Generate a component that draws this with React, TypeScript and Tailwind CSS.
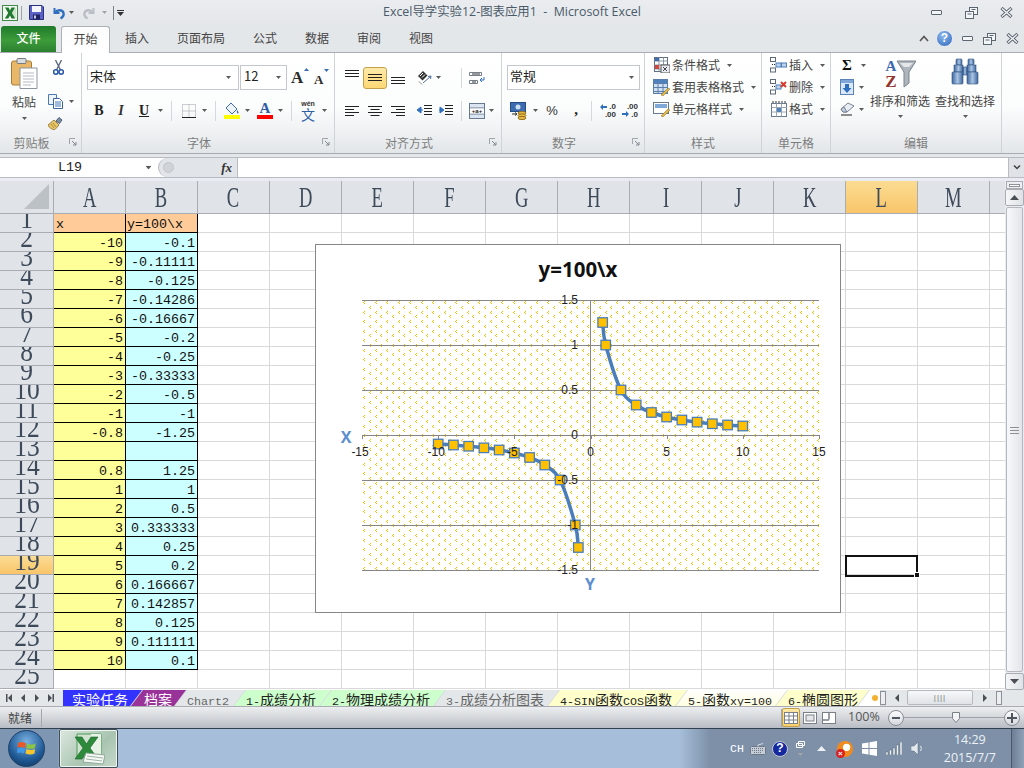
import React from "react";

type P = { className?: string };

const Drop = ({ className = "" }: P) => (
  <svg viewBox="0 0 5 3" className={`w-[5px] h-[3px] shrink-0 ${className}`}><path d="M0 0h5L2.500 3z" fill="#5a5a5a" /></svg>
);
const Sep = ({ className = "" }: P) => <div className={`w-px h-[20px] bg-[#d5d8dc] shrink-0 ${className}`} />;

const ExcelSmall = () => (
  <svg viewBox="0 0 16 16" className="w-[16px] h-[16px]">
    <rect x="0.5" y="0.5" width="15" height="15" fill="#f4f8f2" stroke="#3f8a48" />
    <rect x="9" y="3" width="5" height="10" fill="#cfe5cd" />
    <path d="M3 2.500h3.600L8 5.400 9.500 2.500H13L9.800 8 13.200 13.500H9.600L8 10.400 6.300 13.500H2.800L6.200 8z" fill="#1f7a30" />
  </svg>
);
const Save = () => (
  <svg viewBox="0 0 15 15" className="w-[15px] h-[15px]">
    <path d="M.5.5h12.500l1.500 1.500v12.500H.5z" fill="#5a62c6" stroke="#2b2f80" />
    <rect x="3" y="1" width="9" height="6" fill="#f4f6fb" />
    <rect x="4" y="9.500" width="7" height="5" fill="#20245e" />
    <rect x="5" y="10.500" width="2" height="3" fill="#c6cbe8" />
  </svg>
);
const Undo = ({ grey }: { grey?: boolean }) => (
  <svg viewBox="0 0 14 14" className={`w-[14px] h-[14px] ${grey ? "-scale-x-100" : ""}`}>
    <path d="M2.500 2v5h5" fill="none" stroke={grey ? "#b9bfc5" : "#2f6fc0"} strokeWidth="2" />
    <path d="M3 6.500C5 3.800 10.500 3.200 11.500 7c.5 2.200-1 4.400-3 5.500" fill="none" stroke={grey ? "#b9bfc5" : "#2f6fc0"} strokeWidth="2.400" />
  </svg>
);
const Min = () => <div className="w-[11px] h-[5px] border border-[#5b6673] rounded-[1px] bg-[#f4f5f6]" />;
const Restore = () => (
  <svg viewBox="0 0 13 12" className="w-[13px] h-[12px]"><g fill="#f4f5f6" stroke="#5b6673"><rect x="4.500" y=".5" width="8" height="7" /><rect x=".5" y="4.500" width="8" height="7" /></g><path d="M2.500 7h4M6.500 2.500h4" stroke="#5b6673" /></svg>
);
const Close = () => (
  <svg viewBox="0 0 13 11" className="w-[13px] h-[11px]"><path d="M1.500 1 11.500 10M11.500 1 1.500 10" stroke="#5b6673" strokeWidth="3.200" /><path d="M2 1.500 11 9.500M11 1.500 2 9.500" stroke="#f4f5f6" strokeWidth="1.300" /></svg>
);
const Help = () => (
  <div className="w-[17px] h-[17px] rounded-full bg-[radial-gradient(circle_at_40%_30%,#8fb8ec,#2c67bb)] border border-[#e7edf5] text-white font-bold text-[12px] leading-[15px] text-center font-['Liberation_Sans']">?</div>
);

const Paste = () => (
  <svg viewBox="0 0 27 31" className="w-[27px] h-[31px]">
    <rect x=".5" y="3" width="20" height="24" rx="2" fill="#e8b868" stroke="#a87a3a" />
    <rect x="6" y=".5" width="9" height="5" rx="1" fill="#d8dde2" stroke="#7a7a7a" />
    <path d="M9 10h17v20.500H9z" fill="#fff" stroke="#8c95a0" />
    <path d="M12 15h11M12 18h11M12 21h11M12 24h11M12 27h8" stroke="#b3bac2" />
  </svg>
);
const Cut = () => (
  <svg viewBox="0 0 11 15" className="w-[11px] h-[15px]">
    <path d="M2.500 0 7.500 10M8.500 0 3.500 10" stroke="#5d6b7e" strokeWidth="1.400" />
    <circle cx="2.800" cy="12" r="2.200" fill="none" stroke="#2555a5" strokeWidth="1.500" />
    <circle cx="8.200" cy="12" r="2.200" fill="none" stroke="#2555a5" strokeWidth="1.500" />
  </svg>
);
const Copy = () => (
  <svg viewBox="0 0 15 15" className="w-[15px] h-[15px]">
    <path d="M.5.5h8v10h-8z" fill="#eef3fa" stroke="#4d78ae" />
    <path d="M5.500 4.500h6l3 3v7h-9z" fill="#fff" stroke="#3d66a0" />
    <path d="M7 8h6M7 10h6M7 12h6" stroke="#3f76c0" />
  </svg>
);
const Painter = () => (
  <svg viewBox="0 0 16 14" className="w-[16px] h-[14px]">
    <path d="M0 9 6 4l5 5-4 4.500C5 14 1 12 0 9z" fill="#e9c766" stroke="#9d8340" />
    <path d="M8 5l3-3.500 3 2.500-2.500 3.500z" fill="#7e8ea6" stroke="#4f5d73" />
    <path d="M3 8l3 4M5 7l3 4" stroke="#a98c3e" />
  </svg>
);
const Grow = ({ big }: { big?: boolean }) => (
  <div className={`relative font-['Liberation_Serif'] font-bold text-[#2b2b2b] leading-none ${big ? "text-[17px] w-[17px]" : "text-[13px] w-[14px] pt-[3px]"}`}>
    A
    <svg viewBox="0 0 5 3" className="absolute -top-[1px] -right-[1px] w-[5px] h-[3px]"><path d={big ? "M0 3h5L2.500 0z" : "M0 0h5L2.500 3z"} fill="#3c6cb4" /></svg>
  </div>
);
const Borders = () => (
  <svg viewBox="0 0 14 14" className="w-[14px] h-[14px]"><path d="M.5.5h13v13H.5zM7 .5v13M.5 7h13" fill="none" stroke="#9aa0a6" strokeDasharray="1 1" /><path d="M0 13.500h14" stroke="#222" /></svg>
);
const Fill = () => (
  <svg viewBox="0 0 16 17" className="w-[16px] h-[17px]">
    <path d="M2 6l5-5 6 6-5 5z" fill="#eef3fa" stroke="#3d6db0" />
    <path d="M13 8c1.500 1.500 2 3 1 3.500-1 .3-1.500-1.500-1-3.500z" fill="#3d6db0" />
    <rect y="13" width="16" height="4" fill="#ffff00" />
  </svg>
);
const FontColor = () => (
  <div className="w-[16px] flex flex-col items-center">
    <span className="font-['Liberation_Serif'] font-bold text-[15px] leading-[13px] text-[#2d5ca5]">A</span>
    <span className="w-[16px] h-[4px] bg-[#ff0000]" />
  </div>
);
const Wen = () => (
  <div className="w-[16px] flex flex-col items-center leading-none">
    <span className="font-['Liberation_Sans'] text-[7px] font-bold text-[#333] h-[7px]">wén</span>
    <span className="text-[14px] text-[#2f5fa5] h-[14px]">文</span>
  </div>
);
const Lines = ({ d }: { d: string }) => (
  <svg viewBox="0 0 14 12" className="w-[14px] h-[12px]"><path d={d} stroke="#222" fill="none" /></svg>
);
const Orient = () => (
  <svg viewBox="0 0 15 14" className="w-[15px] h-[14px]">
    <path d="M1 5l5-5 4.500 4.500-5 5z" fill="#333" />
    <path d="M3 5l3-3M5 6.500l3-3" stroke="#fff" />
    <path d="M6 12l8-7M14 5l-3 .5M14 5l-.5 3" fill="none" stroke="#4f6f9f" />
    <path d="M2 10.500l3 3" stroke="#888" />
  </svg>
);
const Indent = ({ out }: { out?: boolean }) => (
  <svg viewBox="0 0 15 12" className="w-[15px] h-[12px]">
    <path d={out ? "M7 .5h8M7 3.500h8M7 6.500h8M7 9.500h8" : "M6 .5h8M6 3.500h8M6 6.500h8M6 9.500h8"} stroke="#222" />
    <path d={out ? "M0 5l4-3v6zM4 5h2" : "M5 5L1 2v6zM0 5h2"} fill="#2f6fc0" stroke="#2f6fc0" />
  </svg>
);
const Wrap = () => (
  <svg viewBox="0 0 16 14" className="w-[16px] h-[14px]">
    <path d="M.5 1.500h12v3H.5zM.5 9.500h8v3H.5z" fill="#fff" stroke="#75808c" />
    <path d="M3 3h8M3 11h4" stroke="#333" />
    <path d="M15 6v3h-4M11 9l2-2M11 9l2 2" fill="none" stroke="#2f6fc0" />
  </svg>
);
const Merge = () => (
  <svg viewBox="0 0 16 16" className="w-[16px] h-[16px]">
    <rect x=".5" y=".5" width="15" height="15" fill="#dbe5f2" stroke="#6a7a8d" />
    <path d="M.5 5h15M.5 11h15" stroke="#6a7a8d" />
    <rect x="1" y="5.500" width="14" height="5" fill="#fff" />
    <text x="8" y="10" textAnchor="middle" fontSize="6" fontWeight="700" fontFamily="Liberation Sans" fill="#222">+a+</text>
  </svg>
);
const Currency = () => (
  <svg viewBox="0 0 17 18" className="w-[17px] h-[18px]">
    <rect x=".5" y=".5" width="15" height="9" fill="#3d6db0" stroke="#244c85" />
    <circle cx="8" cy="5" r="2.500" fill="#cfe0f5" />
    <g fill="#e8b942" stroke="#9a7420"><ellipse cx="12" cy="11" rx="4" ry="1.600" /><ellipse cx="12" cy="13.500" rx="4" ry="1.600" /><ellipse cx="12" cy="16" rx="4" ry="1.600" /></g>
    <path d="M2 12h5M7 12l-2-1.500M7 12l-2 1.500" stroke="#333" fill="none" />
  </svg>
);
const Dec = ({ more }: { more?: boolean }) => (
  <div className="w-[16px] relative font-['Liberation_Sans'] font-bold text-[8px] leading-[8px] text-[#333]">
    <div className="text-right">{more ? ".0" : ".00"}</div>
    <div className="text-right">{more ? ".00" : ".0"}</div>
    <svg viewBox="0 0 7 6" className={`absolute w-[7px] h-[6px] left-0 ${more ? "top-[1px]" : "top-[8px]"}`}><path d={more ? "M0 3l3-3v2h4v2H3v2z" : "M7 3L4 0v2H0v2h4v2z"} fill="#2f6fc0" /></svg>
  </div>
);
const Cond = () => (
  <svg viewBox="0 0 16 16" className="w-[16px] h-[16px]">
    <rect x=".5" y=".5" width="13" height="14" fill="#fff" stroke="#5f6f82" />
    <path d="M.5 4h13M.5 8h13M.5 12h13M5 .5v14M9.500 .5v14" stroke="#8a97a6" />
    <rect x="1" y="1" width="4" height="3" fill="#3d6db0" /><rect x="1" y="8" width="4" height="4" fill="#d8483a" />
    <rect x="7" y="8" width="9" height="8" fill="#e8ecf2" stroke="#555" />
    <path d="M9 10l4 4M13 10l-4 4" stroke="#444" />
  </svg>
);
const TableFmt = () => (
  <svg viewBox="0 0 17 17" className="w-[17px] h-[17px]">
    <rect x=".5" y=".5" width="14" height="14" fill="#cfe0f4" stroke="#5a7ea8" />
    <path d="M.5 4.500h14M.5 8.500h14M.5 12.500h14M5 .5v14M10 .5v14" stroke="#5a7ea8" />
    <rect x="1" y="1" width="13" height="3" fill="#4f81bd" />
    <path d="M8 16l7-7 2 1-7 7z" fill="#e8b942" stroke="#7d6a2a" strokeWidth=".5" />
  </svg>
);
const CellFmt = () => (
  <svg viewBox="0 0 17 15" className="w-[17px] h-[15px]">
    <rect x=".5" y=".5" width="15" height="11" fill="#fff" stroke="#6a7a8d" />
    <rect x="2" y="2" width="12" height="4" fill="#7fa7d8" />
    <path d="M8 14l7-7 2 1-7 7z" fill="#e8b942" stroke="#7d6a2a" strokeWidth=".5" />
  </svg>
);
const CellIns = ({ del }: { del?: boolean }) => (
  <svg viewBox="0 0 17 16" className="w-[17px] h-[16px]">
    <g fill="#fff" stroke="#5d6a78"><rect x=".5" y=".5" width="5" height="4" /><rect x=".5" y="11" width="5" height="4" /></g>
    <rect x="6" y="6" width="5" height="4" fill="#bcd3ee" stroke="#4f7fb8" />
    <path d="M2 7.500h3" stroke="#333" strokeDasharray="1 1" />
    {del ? <path d="M11 3l5 5M16 3l-5 5" stroke="#d83a2a" strokeWidth="2" /> : <rect x="11.500" y="6" width="5" height="4" fill="#bcd3ee" stroke="#4f7fb8" />}
  </svg>
);
const CellF = () => (
  <svg viewBox="0 0 16 16" className="w-[16px] h-[16px]">
    <rect x=".5" y="2.500" width="15" height="13" fill="#fff" stroke="#6a7a8d" />
    <path d="M5.500 2.500v13M10.500 2.500v13M.5 6.500h15M.5 11h15" stroke="#9aa6b4" />
    <rect x="6" y="7" width="4" height="4" fill="#4f81bd" />
    <path d="M1 1h14" stroke="#333" strokeDasharray="2 1" />
  </svg>
);
const FillDown = () => (
  <svg viewBox="0 0 14 16" className="w-[14px] h-[16px]">
    <rect x=".5" y=".5" width="13" height="15" fill="#dce8f7" stroke="#5b82b5" />
    <rect x="1" y="1" width="12" height="3" fill="#7fa7d8" />
    <path d="M5 5h4v4h2.500L7 14 2.500 9H5z" fill="#2f6fc0" />
  </svg>
);
const Eraser = () => (
  <svg viewBox="0 0 15 14" className="w-[15px] h-[14px]">
    <path d="M1 7l7-6 6 3-7 6H3z" fill="#e8edf4" stroke="#79838f" />
    <path d="M1 7l2 3h4L4 5z" fill="#bfd0e6" stroke="#79838f" />
    <path d="M1 13h11" stroke="#222" />
  </svg>
);
const SortIcon = () => (
  <svg viewBox="0 0 32 30" className="w-[32px] h-[30px]">
    <path d="M13 3h19l-7 11v11l-5 4V14z" fill="#aeb5bc" stroke="#7c848c" />
    <path d="M16 5h13l-4 4h-5z" fill="#e4e7ea" />
    <text x="7" y="13" textAnchor="middle" fontFamily="Liberation Serif" fontWeight="700" fontSize="15" fill="#3a67ad">A</text>
    <text x="7" y="29" textAnchor="middle" fontFamily="Liberation Serif" fontWeight="700" fontSize="17" fill="#93352e">Z</text>
  </svg>
);
const Binoc = () => (
  <svg viewBox="0 0 28 27" className="w-[28px] h-[27px]">
    <defs><linearGradient id="bn" x1="0" x2="1" y1="0" y2="0"><stop offset="0" stopColor="#3f689f" /><stop offset=".5" stopColor="#a9c2e2" /><stop offset="1" stopColor="#3f689f" /></linearGradient></defs>
    <g fill="url(#bn)" stroke="#30507c" strokeWidth=".6">
      <rect x="5" y="1" width="6" height="6" rx="1" /><rect x="17" y="1" width="6" height="6" rx="1" />
      <rect x="3" y="7" width="9" height="7" /><rect x="16" y="7" width="9" height="7" />
      <rect x="1" y="14" width="11" height="12" rx="1" /><rect x="16" y="14" width="11" height="12" rx="1" />
      <rect x="12" y="9" width="4" height="8" />
    </g>
  </svg>
);
const Launcher = () => (
  <svg viewBox="0 0 8 8" className="absolute right-[4px] top-[5px] w-[8px] h-[8px]"><path d="M.5 6V.5H6" fill="none" stroke="#a0a5ab" /><path d="M3 3l4 4M7 4v3H4" fill="none" stroke="#808790" /></svg>
);

const Group = ({ w, label, launcher, children }: { w: string; label: string; launcher?: boolean; children: React.ReactNode }) => (
  <div className={`${w} h-full flex flex-col border-r border-[#cfd2d6] shrink-0`}>
    <div className="flex-1 min-h-0">{children}</div>
    <div className={`h-[20px] relative text-center text-[12px] leading-[19px] text-[#7d7d7d] ${launcher ? "pr-[18px]" : ""}`}>
      {label}
      {launcher && <Launcher />}
    </div>
  </div>
);
const Combo = ({ w, text, pad = "pl-[2px]", arrow }: { w: string; text: string; pad?: string; arrow: string }) => (
  <div className={`${w} h-[25px] border border-[#c4c8cd] bg-white flex items-center ${pad} text-[13px] text-[#222]`}>
    <span className="flex-1 -mt-[3px]">{text}</span>
    <Drop className={arrow} />
  </div>
);
const B = ({ w, className = "", children }: { w: string; className?: string; children: React.ReactNode }) => (
  <div className={`${w} shrink-0 flex items-center justify-center ${className}`}>{children}</div>
);
const StyleRow = ({ icon, text, drop }: { icon: React.ReactNode; text: string; drop: string }) => (
  <div className="h-[22px] flex items-center text-[12px] text-[#444]">
    <B w="w-[17px]" className="ml-[8px]">{icon}</B>
    <span className="ml-[2px]">{text}</span>
    <Drop className={drop} />
  </div>
);

const Ribbon = () => (
  <div className="h-[102px] flex border-y border-[#a9adb3] bg-[linear-gradient(#ffffff_0%,#fbfcfc_55%,#eef0f2_80%,#e3e6e9_100%)]">
    <Group w="w-[82px]" label="剪贴板" launcher>
      <div className="flex">
        <div className="w-[48px] flex flex-col items-center pt-[5px] pr-[0px]">
          <Paste />
          <span className="text-[12px] text-[#444] mt-[4px] leading-[18px]">粘贴</span>
          <Drop className="mt-[6px]" />
        </div>
        <div className="flex flex-col pt-[7px]">
          <div className="ml-[3px] h-[25px]"><B w="w-[15px]"><Cut /></B></div>
          <div className="h-[26px] flex items-center pt-[6px]"><Copy /><Drop className="ml-[6px]" /></div>
          <div className="mt-[5px]"><Painter /></div>
        </div>
      </div>
    </Group>
    <Group w="w-[253px]" label="字体" launcher>
      <div className="flex flex-col pt-[12px]">
        <div className="h-[25px] flex items-center ml-[5px]">
          <Combo w="w-[152px]" text="宋体" arrow="mr-[7px]" />
          <Combo w="w-[47px] ml-[1px]" text="12" pad="pl-[3px]" arrow="mr-[5px]" />
          <B w="w-[17px]" className="ml-[4px]"><Grow big /></B>
          <B w="w-[14px]" className="ml-[6px]"><Grow /></B>
        </div>
        <div className="h-[25px] mt-[8px] flex items-center">
          <B w="w-[14px]" className="ml-[10px] font-['Liberation_Serif'] font-black text-[14px] text-[#222]">B</B>
          <B w="w-[14px]" className="ml-[8px] font-['Liberation_Serif'] italic font-bold text-[14px] text-[#333]">I</B>
          <B w="w-[14px]" className="ml-[9px] font-['Liberation_Serif'] font-bold underline text-[14px] text-[#222]">U</B>
          <Drop className="ml-[7px]" />
          <Sep className="ml-[8px]" />
          <B w="w-[14px]" className="ml-[10px]"><Borders /></B>
          <Drop className="ml-[6px]" />
          <Sep className="ml-[8px]" />
          <B w="w-[16px]" className="ml-[8px]"><Fill /></B>
          <Drop className="ml-[5px]" />
          <B w="w-[16px]" className="ml-[7px]"><FontColor /></B>
          <Drop className="ml-[5px]" />
          <Sep className="ml-[8px]" />
          <B w="w-[16px]" className="ml-[8px]"><Wen /></B>
          <Drop className="ml-[6px]" />
        </div>
      </div>
    </Group>
    <Group w="w-[167px]" label="对齐方式" launcher>
      <div className="flex flex-col pt-[12px]">
        <div className="h-[25px] flex items-center">
          <B w="w-[14px]" className="ml-[10px] -mt-[5px]"><Lines d="M0 1.500h14M0 4.500h14M0 7.500h14" /></B>
          <B w="w-[24px] h-[22px]" className="ml-[4px] border border-[#c2a14c] rounded-[3px] bg-[linear-gradient(#fde9a8,#fdd774)]"><Lines d="M0 2.500h14M0 5.500h14M0 8.500h14" /></B>
          <B w="w-[14px]" className="ml-[4px] mt-[5px]"><Lines d="M0 3.500h14M0 6.500h14M0 9.500h14" /></B>
          <B w="w-[15px]" className="ml-[12px]"><Orient /></B>
          <Drop className="ml-[4px]" />
          <Sep className="ml-[20px]" />
          <B w="w-[16px]" className="ml-[7px]"><Wrap /></B>
        </div>
        <div className="h-[25px] mt-[8px] flex items-center">
          <B w="w-[14px]" className="ml-[10px]"><Lines d="M0 1.500h14M0 4.500h9M0 7.500h14M0 10.500h9" /></B>
          <B w="w-[14px]" className="ml-[9px]"><Lines d="M0 1.500h14M2.500 4.500h9M0 7.500h14M2.500 10.500h9" /></B>
          <B w="w-[14px]" className="ml-[9px]"><Lines d="M0 1.500h14M5 4.500h9M0 7.500h14M5 10.500h9" /></B>
          <B w="w-[15px]" className="ml-[12px]"><Indent out /></B>
          <B w="w-[15px]" className="ml-[7px]"><Indent /></B>
          <Sep className="ml-[7px]" />
          <B w="w-[16px]" className="ml-[7px]"><Merge /></B>
          <Drop className="ml-[4px]" />
        </div>
      </div>
    </Group>
    <Group w="w-[143px]" label="数字" launcher>
      <div className="flex flex-col pt-[12px]">
        <div className="h-[25px] flex items-center ml-[5px]">
          <Combo w="w-[133px]" text="常规" arrow="mr-[5px]" />
        </div>
        <div className="h-[25px] mt-[8px] flex items-center">
          <B w="w-[17px]" className="ml-[8px]"><Currency /></B>
          <Drop className="ml-[6px]" />
          <B w="w-[16px]" className="ml-[6px] font-['Liberation_Sans'] text-[13px] text-[#333]">%</B>
          <B w="w-[12px]" className="ml-[10px] font-['Liberation_Serif'] font-bold text-[15px] text-[#222] -mt-[3px]">,</B>
          <Sep className="ml-[9px]" />
          <B w="w-[16px]" className="ml-[8px]"><Dec more /></B>
          <B w="w-[16px]" className="ml-[6px]"><Dec /></B>
        </div>
      </div>
    </Group>
    <Group w="w-[117px]" label="样式">
      <div className="pt-[1px]">
        <StyleRow icon={<Cond />} text="条件格式" drop="ml-[7px]" />
        <StyleRow icon={<TableFmt />} text="套用表格格式" drop="ml-[7px]" />
        <StyleRow icon={<CellFmt />} text="单元格样式" drop="ml-[7px]" />
      </div>
    </Group>
    <Group w="w-[69px]" label="单元格">
      <div className="pt-[1px]">
        <StyleRow icon={<CellIns />} text="插入" drop="ml-[7px]" />
        <StyleRow icon={<CellIns del />} text="删除" drop="ml-[7px]" />
        <StyleRow icon={<CellF />} text="格式" drop="ml-[7px]" />
      </div>
    </Group>
    <Group w="w-[171px]" label="编辑">
      <div className="flex h-full">
        <div className="w-[39px] pt-[1px] shrink-0">
          <div className="h-[22px] flex items-center pl-[9px]"><span className="font-['Liberation_Serif'] font-bold text-[15px] w-[14px] text-center text-[#111]">Σ</span><Drop className="ml-[7px]" /></div>
          <div className="h-[22px] flex items-center pl-[9px]"><FillDown /><Drop className="ml-[5px]" /></div>
          <div className="h-[22px] flex items-center pl-[9px]"><Eraser /><Drop className="ml-[4px]" /></div>
        </div>
        <div className="w-[60px] flex flex-col items-center pt-[5px] text-[12px] text-[#444] whitespace-nowrap">
          <SortIcon />
          <span className="mt-[4px] leading-[18px]">排序和筛选</span>
          <Drop className="mt-[5px]" />
        </div>
        <div className="w-[60px] ml-[5px] flex flex-col items-center pt-[5px] text-[12px] text-[#444] whitespace-nowrap">
          <Binoc />
          <span className="mt-[7px] leading-[18px]">查找和选择</span>
          <Drop className="mt-[5px]" />
        </div>
      </div>
    </Group>
  </div>
);

const FormulaBar = () => (
  <div className="h-[27px] bg-[#e9edf3] flex flex-col">
    <div className="h-[3px] bg-[#e4e7ea]" />
    <div className="h-[21px] flex border-y border-[#b8bcc2] bg-white">
      <div className="w-[158px] flex items-center">
        <span className="w-[140px] text-center font-['Liberation_Mono'] text-[13.33px] text-[#222]">L19</span>
        <Drop className="ml-[6px] scale-125" />
      </div>
      <div className="w-[79px] bg-[#e1e4e8] rounded-l-[10px] border-l border-[#b5b9be] flex items-center pl-[4px]">
        <span className="w-[11px] h-[11px] rounded-full bg-[#d0d3d7] border border-[#c2c5c9]" />
        <span className="ml-auto mr-[5px] font-['Liberation_Serif'] italic font-bold text-[13px] text-[#333]">fx</span>
      </div>
      <div className="flex-1 border-l border-[#b8bcc2]" />
      <div className="w-[16px] bg-[#dfe2e6] border-l border-[#b8bcc2] flex items-center justify-center">
        <svg viewBox="0 0 8 5" className="w-[8px] h-[5px]"><path d="M1 .5l3 3 3-3" fill="none" stroke="#444" strokeWidth="1.500" /></svg>
      </div>
    </div>
  </div>
);

const COLS = ["A", "B", "C", "D", "E", "F", "G", "H", "I", "J", "K", "L", "M", ""];
const XS = ["-10", "-9", "-8", "-7", "-6", "-5", "-4", "-3", "-2", "-1", "-0.8", "", "0.8", "1", "2", "3", "4", "5", "6", "7", "8", "9", "10"];
const YS = ["-0.1", "-0.11111", "-0.125", "-0.14286", "-0.16667", "-0.2", "-0.25", "-0.33333", "-0.5", "-1", "-1.25", "", "1.25", "1", "0.5", "0.333333", "0.25", "0.2", "0.166667", "0.142857", "0.125", "0.111111", "0.1"];

const ColHeader = () => (
  <div className="flex h-[33px]">
    <div className="w-[54px] shrink-0 bg-[#e0e3e8] border-r border-b border-[#a9adb3] flex items-end justify-end pr-[4px] pb-[4px]">
      <svg viewBox="0 0 25 25" className="w-[25px] h-[25px]"><path d="M25 0v25H0z" fill="#bcc1c6" /></svg>
    </div>
    {COLS.map((c) => (
      <div key={c || "n"} className={`w-[72px] shrink-0 border-r border-b border-[#a9adb3] flex items-center justify-center overflow-hidden ${c === "L" ? "bg-[linear-gradient(#fbdc93,#f9c56a)]" : "bg-[#e0e3e8]"}`}>
        <span className="font-['Liberation_Serif'] text-[30px] leading-none scale-x-[0.62] text-[#3d4a5a] -mt-[1px]">{c}</span>
      </div>
    ))}
  </div>
);

const Row = ({ n }: { n: number }) => {
  const data = n >= 2 && n <= 24;
  const a = n === 1 ? "x" : data ? XS[n - 2] : "";
  const b = n === 1 ? "y=100\\x" : data ? YS[n - 2] : "";
  const filled = n === 1 || data;
  const base = "h-[19px] w-[72px] shrink-0 border-r border-b overflow-hidden font-['Liberation_Mono'] text-[13.33px] leading-[21px] text-[#111] whitespace-nowrap";
  const aBg = n === 1 ? "bg-[#ffcc99] pl-[2px]" : data ? "bg-[#ffff99] text-right pr-[2px]" : "";
  const bBg = n === 1 ? "bg-[#ffcc99] pl-[1px]" : data ? "bg-[#ccffff] text-right pr-[2px]" : "";
  return (
    <div className="flex h-[19px]">
      <div className={`w-[54px] shrink-0 h-[19px] border-r border-b border-[#a9adb3] overflow-hidden flex justify-center items-end ${n === 19 ? "bg-[linear-gradient(#fbdc93,#f9c56a)]" : "bg-[#e0e3e8]"}`}>
        <span className="font-['Liberation_Serif'] text-[30px] leading-[30px] scale-x-[0.85] text-[#3d4a5a] mb-[-1px] whitespace-nowrap">{n}</span>
      </div>
      <div className={`${base} ${aBg} ${filled ? "border-black" : "border-[#d9d9d9]"}`}>{a}</div>
      <div className={`${base} ${bBg} ${filled ? "border-black" : "border-[#d9d9d9]"}`}>{b}</div>
      {COLS.slice(2).map((c) => (
        <div key={c || "n"} className="h-[19px] w-[72px] shrink-0 border-r border-b border-[#d9d9d9]" />
      ))}
    </div>
  );
};

const px = (x: number) => 590.5 + x * 15.23;
const py = (y: number) => 435 - y * 90;
const NEG = [-10, -9, -8, -7, -6, -5, -4, -3, -2, -1, -0.8].map((x) => [px(x), py(1 / x)]);
const POS = [0.8, 1, 2, 3, 4, 5, 6, 7, 8, 9, 10].map((x) => [px(x), py(1 / x)]);
const smooth = (p: number[][]) => {
  let d = `M${p[0][0]} ${p[0][1]}`;
  for (let i = 0; i < p.length - 1; i++) {
    const p0 = p[Math.max(i - 1, 0)], p1 = p[i], p2 = p[i + 1], p3 = p[Math.min(i + 2, p.length - 1)];
    d += `C${p1[0] + (p2[0] - p0[0]) / 6} ${p1[1] + (p2[1] - p0[1]) / 6} ${p2[0] - (p3[0] - p1[0]) / 6} ${p2[1] - (p3[1] - p1[1]) / 6} ${p2[0]} ${p2[1]}`;
  }
  return d;
};
const DOTS: [number, number][] = [[0, 0], [12, 0], [6, 5], [17, 5], [0, 10], [12, 10], [6, 14], [17, 14]];

const Chart = () => (
  <div className="absolute left-[315px] top-[63px] w-[526px] h-[369px] bg-white border border-[#868686]">
    <svg viewBox="316 245 524 367" className="w-[524px] h-[367px] block font-['Liberation_Sans']">
      <defs>
        <pattern id="dots" x="362" y="300" width="23" height="19" patternUnits="userSpaceOnUse">
          <g fill="#fbbd00" shapeRendering="crispEdges">
            {DOTS.map(([x, y]) => (
              <g key={`${x}-${y}`}>
                <rect x={x + 2} y={y + 1} width="1" height="1" />
                <rect x={x + 1} y={y + 2} width="1" height="1" />
                <rect x={x + 2} y={y + 3} width="1" height="1" />
              </g>
            ))}
          </g>
        </pattern>
      </defs>
      <text x="578" y="277" textAnchor="middle" fontFamily="Open Sans" fontWeight="700" fontSize="20.500" fill="#111">y=100\x</text>
      <rect x="362" y="300" width="457" height="270" fill="url(#dots)" />
      <g stroke="#868686" strokeWidth="1" shapeRendering="crispEdges">
        {[1.5, 1, 0.5, 0, -0.5, -1, -1.5].map((v) => <path key={v} d={`M362 ${Math.round(py(v))}.5H819`} />)}
        <path d="M590.500 300V570" />
        {[-15, -10, -5, 0, 5, 10, 15].map((v) => <path key={v} d={`M${Math.round(px(v))}.5 435V439`} />)}
      </g>
      {[NEG, POS].map((p, k) => (
        <g key={k}>
          <path d={smooth(p)} fill="none" stroke="#4a7ebb" strokeWidth="3.500" />
          {p.map(([x, y], i) => <rect key={i} x={x - 4.750} y={y - 4.750} width="9.500" height="9.500" fill="#ffc000" stroke="#4a7ebb" strokeWidth="1.300" />)}
        </g>
      ))}
      <g fontSize="12" fill="#222" textAnchor="middle">
        {[-15, -10, -5, 0, 5, 10, 15].map((v) => <text key={v} x={px(v) - (v < 0 ? 2 : 0)} y="456">{v}</text>)}
      </g>
      <g fontSize="12" fill="#222" textAnchor="end">
        {[1.5, 1, 0.5, 0, -0.5, -1, -1.5].map((v) => <text key={v} x="578" y={py(v) + 4}>{v}</text>)}
      </g>
      <text x="346" y="443" textAnchor="middle" fontFamily="Open Sans" fontWeight="700" fontSize="16" fill="#5b8fd0">X</text>
      <text x="590" y="590" textAnchor="middle" fontFamily="Open Sans" fontWeight="700" fontSize="16" fill="#5b8fd0">Y</text>
    </svg>
  </div>
);

const Arrow = ({ up }: { up?: boolean }) => (
  <div className="h-[17px] border border-[#a9adb3] rounded-[2px] bg-[linear-gradient(90deg,#f4f6f8,#dfe2e6)] flex items-center justify-center">
    <svg viewBox="0 0 9 5" className={`w-[9px] h-[5px] ${up ? "" : "rotate-180"}`}><path d="M0 5h9L4.500 0z" fill="#4a4f55" /></svg>
  </div>
);
const VScroll = () => (
  <div className="w-[19px] shrink-0 h-full bg-[#e9ecf0] flex flex-col">
    <div className="h-[8px] border border-[#a9adb3] bg-[#eceef1] mx-[1px] flex items-center justify-center"><div className="w-[11px] h-[3px] border border-[#8d9197] bg-white" /></div>
    <Arrow up />
    <div className="flex-1 my-[1px] mx-[1px] border border-[#b5b9bf] rounded-[2px] bg-[linear-gradient(90deg,#f7f8fa,#e2e5e9)] flex items-center justify-center">
      <div className="w-[9px] h-[7px] border-y border-[#8d9197] -mt-[18px] flex items-center"><div className="w-full h-px bg-[#8d9197]" /></div>
    </div>
    <Arrow />
  </div>
);

const Mix = ({ t }: { t: string }) => (
  <>
    {t.split(/([\u4e00-\u9fff]+)/).map((s, i) =>
      i % 2 ? <span key={i} className="text-[14px]">{s}</span> : <span key={i} className="font-['Liberation_Mono'] text-[11.67px]">{s}</span>
    )}
  </>
);
const TABS = [
  { t: "实验任务", w: "w-[79px]", c: "bg-[#3333ff] text-white pl-[9px] [clip-path:polygon(0_0,100%_0,calc(100%-12px)_100%,0_100%)]" },
  { t: "档案", w: "w-[55px] -ml-[11px]", c: "bg-[#993399] text-white pl-[13px] [clip-path:polygon(12px_0,100%_0,calc(100%-12px)_100%,0_100%)]" },
  { t: "Chart2", w: "w-[70px] -ml-[11px]", c: "bg-[#e4e7ea] text-[#666] pl-[12px] [clip-path:polygon(12px_0,100%_0,calc(100%-12px)_100%,0_100%)]" },
  { t: "1-成绩分析", w: "w-[97px] -ml-[11px]", c: "bg-[#ccffcc] text-[#222] pl-[12px] [clip-path:polygon(12px_0,100%_0,calc(100%-12px)_100%,0_100%)]" },
  { t: "2-物理成绩分析", w: "w-[125px] -ml-[11px]", c: "bg-[#ccffcc] text-[#222] pl-[12px] [clip-path:polygon(12px_0,100%_0,calc(100%-12px)_100%,0_100%)]" },
  { t: "3-成绩分析图表", w: "w-[125px] -ml-[11px]", c: "bg-[#e4e7ea] text-[#666] pl-[12px] [clip-path:polygon(12px_0,100%_0,calc(100%-12px)_100%,0_100%)]" },
  { t: "4-SIN函数COS函数", w: "w-[139px] -ml-[11px]", c: "bg-[#ffffcc] text-[#222] pl-[12px] [clip-path:polygon(12px_0,100%_0,calc(100%-12px)_100%,0_100%)]" },
  { t: "5-函数xy=100", w: "w-[111px] -ml-[11px]", c: "bg-[linear-gradient(#ffffff,#ffffe0)] text-[#222] pl-[12px] [clip-path:polygon(12px_0,100%_0,calc(100%-12px)_100%,0_100%)]" },
  { t: "6-椭圆图形", w: "w-[93px] -ml-[11px]", c: "bg-[#ffffcc] text-[#222] pl-[12px] [clip-path:polygon(12px_0,100%_0,calc(100%-12px)_100%,0_100%)]" },
];
const Nav = ({ d }: { d: string }) => (
  <svg viewBox="0 0 6 8" className="w-[6px] h-[8px]"><path d={d} fill="#4a4f55" /></svg>
);
const SheetBar = () => (
  <div className="h-[17px] flex bg-[#d7dade] border-b border-[#a9adb3] overflow-hidden">
    <div className="w-[63px] shrink-0 flex items-center pl-[6px] gap-[8px] bg-[#e4e7ea]">
      <Nav d="M0 0h1.500v8H0zM6 0v8L2 4z" />
      <Nav d="M5 0v8L1 4z" />
      <Nav d="M1 0v8l4-4z" />
      <Nav d="M0 0v8l4-4zM4.500 0H6v8H4.500z" />
    </div>
    {TABS.map((x) => (
      <div key={x.t} className={`${x.w} shrink-0 h-[16px] overflow-hidden whitespace-nowrap leading-[17px] font-['Noto_Sans_CJK_SC'] ${x.c}`}><Mix t={x.t} /></div>
    ))}
    <div className="w-[22px] -ml-[11px] shrink-0 h-[16px] bg-white [clip-path:polygon(12px_0,100%_0,100%_100%,0_100%)] flex justify-end items-center pr-[1px]">
      <svg viewBox="0 0 8 8" className="w-[8px] h-[8px]"><circle cx="4" cy="4" r="3" fill="#f5b030" /></svg>
    </div>
    <div className="w-[6px] h-[14px] mt-[1px] border border-[#8d9197] bg-[#eceef1] shrink-0" />
    <div className="flex flex-1 bg-[#e4e7ea]">
      <div className="ml-[8px] mt-[4px]"><Nav d="M5 0v8L1 4z" /></div>
      <div className="w-[66px] h-[15px] ml-[7px] border border-[#b5b9bf] rounded-[2px] bg-[linear-gradient(#f7f8fa,#dfe2e6)] flex items-center justify-center shrink-0 font-['Liberation_Sans'] text-[8px] text-[#777] tracking-[1px]">||||</div>
      <div className="ml-[9px] mt-[4px]"><Nav d="M1 0v8l4-4z" /></div>
      <div className="w-[6px] h-[14px] mt-[1px] ml-[8px] border border-[#8d9197] bg-[#eceef1] shrink-0" />
    </div>
  </div>
);

const ViewIcon = ({ kind }: { kind: number }) => (
  <svg viewBox="0 0 14 12" className="w-[14px] h-[12px]">
    <rect x=".5" y=".5" width="13" height="11" fill="#fff" stroke="#7a8088" />
    {kind === 0 && <path d="M.5 4h13M.5 8h13M5 .5v11M9.500 .5v11" stroke="#7a8088" />}
    {kind === 1 && <rect x="3" y="3" width="8" height="6" fill="#e4e6e9" stroke="#7a8088" />}
    {kind === 2 && <path d="M7 .5v7M.5 8H7" stroke="#7a8088" strokeWidth="1.500" />}
  </svg>
);
const ZoomBtn = ({ plus }: { plus?: boolean }) => (
  <div className="w-[16px] h-[16px] rounded-full border border-[#878d95] bg-[linear-gradient(#fdfdfe,#d5d8dd)] flex items-center justify-center shrink-0">
    <svg viewBox="0 0 10 10" className="w-[10px] h-[10px]"><path d={plus ? "M0 5h10M5 0v10" : "M1 5h8"} stroke="#50565d" strokeWidth="2" /></svg>
  </div>
);
const StatusBar = () => (
  <div className="h-[21px] flex items-center bg-[linear-gradient(#eceef0,#d4d7db_50%,#b8bcc4)] text-[12px] text-[#444]">
    <span className="ml-[8px] whitespace-nowrap shrink-0">就绪</span>
    <div className="w-px h-[18px] bg-[#a4a8ae] ml-[9px] shrink-0" />
    <div className="w-px h-[18px] bg-[#a4a8ae] ml-[739px] shrink-0" />
    <div className="w-[18px] h-[19px] border border-[#c2a14c] rounded-[2px] bg-[linear-gradient(#fde9a8,#fdd06a)] flex items-center justify-center shrink-0"><ViewIcon kind={0} /></div>
    <div className="ml-[3px] shrink-0"><ViewIcon kind={1} /></div>
    <div className="ml-[5px] shrink-0"><ViewIcon kind={2} /></div>
    <span className="w-[34px] ml-[12px] shrink-0 font-['Open_Sans'] text-[12.500px] text-[#555]">100%</span>
    <div className="ml-[6px] shrink-0"><ZoomBtn /></div>
    <div className="w-[100px] h-[1px] bg-[#9da2a9] relative shrink-0">
      <svg viewBox="0 0 8 11" className="absolute left-[48px] -top-[5px] w-[8px] h-[11px]"><path d="M.5.5h7v6L4 10.500.5 6.500z" fill="#f2f3f5" stroke="#7a8088" /></svg>
    </div>
    <ZoomBtn plus />
  </div>
);

const Orb = () => (
  <div className="w-[37px] h-[37px] rounded-full border border-[#1f3f66] bg-[radial-gradient(circle_at_50%_30%,#7ab0e0,#1f5a96_60%,#0c2f55)] flex items-center justify-center">
    <svg viewBox="0 0 20 18" className="w-[20px] h-[18px]">
      <path d="M1 3c3-1.500 5-1 8 .5L8 8C5.500 7 3 6.500.5 7.500z" fill="#e85a2a" />
      <path d="M10 3.500c3 1.500 5.500 1.500 8.500 0L18 8c-3 1.300-5.500 1-8.500 0z" fill="#8cc63f" />
      <path d="M.5 8.500C3 7.500 5.500 8 8 9L7 13.500C4.500 12.500 2.500 12 0 13z" fill="#3f9be8" />
      <path d="M9.500 9c3 1.200 5.500 1.300 8.500 0l-.5 4.500c-3 1.300-5.500 1.200-9 0z" fill="#f7c52e" />
    </svg>
  </div>
);
const ExcelBig = () => (
  <svg viewBox="0 0 32 32" className="w-[32px] h-[32px]">
    <path d="M4 1h24v23H4z" fill="#cfe3cf" stroke="#4f9a5a" />
    <path d="M18 1h10v20H18z" fill="#e8f2e6" />
    <path d="M2 4h7l4.500 7L18 4h7l-8 11 8 11h-7l-4.500-7L9 26H2l8-11z" fill="#2d8a3a" stroke="#17602a" strokeWidth=".6" />
    <path d="M13 20l19 2-2 9-20-2z" fill="#f6f8f4" stroke="#8ea89a" />
    <path d="M14 23l16 2M13 26l16 2" stroke="#9fb5a8" />
  </svg>
);
const Taskbar = () => (
  <div className="flex-1 border-t border-[#30404f] flex items-center bg-[linear-gradient(90deg,#7f96b2_0,#7f96b2_58px,#a6bed9_60px,#a6bed9_680px,#7d90a8_710px,#7d90a8_100%)] text-white">
    <div className="ml-[8px]"><Orb /></div>
    <div className="ml-[14px] w-[59px] h-[39px] border border-[#3f4f58] rounded-[2px] bg-[linear-gradient(135deg,#dbe7de,#a8c4b0_60%,#c7d9cb)] flex items-center justify-center shadow-[inset_0_0_0_1px_#eef4f0]"><ExcelBig /></div>
    <span className="ml-[612px] font-['Liberation_Mono'] text-[11.500px]">CH</span>
    <svg viewBox="0 0 16 12" className="ml-[6px] w-[16px] h-[12px]"><rect x=".5" y="3.500" width="15" height="8" rx="1" fill="#c6cdd6" stroke="#6c7886" /><path d="M2 5.500h12M2 7.500h12M4 9.500h8" stroke="#6c7886" strokeDasharray="1 1" /><path d="M8 3.500V2l5-1.500" stroke="#d4dae1" fill="none" /></svg>
    <div className="ml-[6px] w-[16px] h-[16px] rounded-full bg-[#1428a0] border-[1.500px] border-[#c4c8d0] text-center font-['Liberation_Sans'] font-bold text-[12px] leading-[13px]">?</div>
    <div className="ml-[8px] flex flex-col items-center gap-[5px] w-[9px]">
      <svg viewBox="0 0 9 7" className="w-[9px] h-[7px]"><path d="M2.500.5h6v4h-6zM.5 2.500h6v4h-6z" fill="none" stroke="#fff" /></svg>
      <Drop className="invert" />
    </div>
    <svg viewBox="0 0 9 5" className="ml-[12px] w-[9px] h-[5px]"><path d="M0 5h9L4.500 0z" fill="#eef1f4" /></svg>
    <div className="ml-[11px] w-[16px] h-[16px] rounded-full bg-[radial-gradient(circle_at_60%_40%,#fff_0,#fff_25%,#f08a1c_30%)] relative">
      <span className="absolute -left-[1px] -bottom-[1px] w-[9px] h-[9px] rounded-full bg-[#d81f1f] text-[8px] leading-[9px] text-center font-bold font-['Liberation_Sans']">×</span>
    </div>
    <svg viewBox="0 0 15 15" className="ml-[9px] w-[15px] h-[15px]"><path d="M0 2.500l6.500-1v5.500H0zM7.500 1.300 15 0v7H7.500zM0 8h6.500v5.500L0 12.500zM7.500 8H15v7l-7.500-1.300z" fill="#fff" /></svg>
    <svg viewBox="0 0 16 13" className="ml-[9px] w-[16px] h-[13px]"><path d="M0 10h2v3H0zM3.500 8h2v5h-2zM7 6h2v7H7zM10.500 3h2v10h-2zM14 0h2v13h-2z" fill="#eef1f4" stroke="#4d5a68" strokeWidth=".4" /></svg>
    <svg viewBox="0 0 13 13" className="ml-[9px] w-[13px] h-[13px]"><path d="M0 4h3l4-4v13L3 9H0z" fill="#e4e9ee" stroke="#5b6876" strokeWidth=".5" /><path d="M9.500 4c1 1.500 1 3.500 0 5" fill="none" stroke="#eef1f4" /></svg>
    <div className="ml-[20px] w-[52px] text-center text-[12.500px] font-['Open_Sans'] leading-[18px] text-[#eef2f6] whitespace-nowrap flex flex-col items-center">
      <span>14:29</span>
      <span>2015/7/7</span>
    </div>
    <div className="ml-auto w-[13px] h-full border-l border-[#4a5a6a] bg-[linear-gradient(90deg,#6d7f95,#8fa1b6)]" />
  </div>
);

const TAB_NAMES = [["插入"], ["页面布局"], ["公式"], ["数据"], ["审阅"], ["视图"]];

export default function App() {
  return (
    <div className="w-[1024px] h-[768px] overflow-hidden flex flex-col bg-[#e4e7ea] font-['Noto_Sans_CJK_SC','Liberation_Sans',sans-serif]">
      <div className="h-[25px] grid grid-cols-[1fr_auto_1fr] items-center bg-[linear-gradient(#eaecef,#e4e7ea)]">
        <div className="flex items-center">
          <div className="ml-[2px]"><ExcelSmall /></div>
          <div className="w-px h-[14px] bg-[#9ea3a9] ml-[3px]" />
          <div className="ml-[7px]"><Save /></div>
          <div className="ml-[8px]"><Undo /></div>
          <Drop className="ml-[3px]" />
          <div className="ml-[8px]"><Undo grey /></div>
          <Drop className="ml-[6px] opacity-50" />
          <div className="w-px h-[14px] bg-[#7d8288] ml-[6px]" />
          <svg viewBox="0 0 7 6" className="ml-[3px] w-[7px] h-[6px]"><path d="M0 .5h7" stroke="#333" /><path d="M0 2h7L3.500 6z" fill="#333" /></svg>
        </div>
        <div className="text-[12.400px] text-[#4b5a69] whitespace-pre font-['Open_Sans','Noto_Sans_CJK_SC',sans-serif]">Excel导学实验12-图表应用1  -  Microsoft Excel</div>
        <div className="flex items-center justify-end">
          <Min />
          <div className="ml-[23px]"><Restore /></div>
          <div className="ml-[22px] mr-[11px]"><Close /></div>
        </div>
      </div>
      <div className="h-[27px] flex items-end text-[12px] text-[#444]">
        <div className="ml-[1px] w-[55px] h-[26px] rounded-t-[3px] bg-[linear-gradient(#1f7a2a,#3d9c3a_55%,#2b8030)] text-white text-center leading-[24px] font-medium">文件</div>
        <div className="ml-[5px] w-[49px] h-[27px] bg-[linear-gradient(#fcfcfd,#ffffff)] border border-b-0 border-[#adb1b6] rounded-t-[3px] text-center leading-[24px] -mb-[1px] relative z-10">开始</div>
        {TAB_NAMES.map(([t], i) => (
          <div key={t} className={`h-[26px] leading-[24px] ${i === 0 ? "ml-[15px]" : "ml-[28px]"}`}>{t}</div>
        ))}
        <div className="ml-auto self-center flex items-center">
          <svg viewBox="0 0 10 7" className="w-[10px] h-[7px]"><path d="M1 6l4-4.500L9 6" fill="none" stroke="#555" strokeWidth="1.600" /></svg>
          <div className="ml-[7px]"><Help /></div>
          <div className="ml-[9px]"><Min /></div>
          <div className="ml-[10px]"><Restore /></div>
          <div className="ml-[10px] mr-[5px]"><Close /></div>
        </div>
      </div>
      <Ribbon />
      <FormulaBar />
      <div className="h-[509px] flex overflow-hidden">
        <div className="relative w-[1005px] shrink-0 overflow-hidden bg-white">
          <ColHeader />
          {Array.from({ length: 25 }, (_, i) => <Row key={i} n={i + 1} />)}
          <Chart />
          <div className="absolute left-[845px] top-[374px] w-[73px] h-[22px] border-2 border-[#111]" />
          <div className="absolute left-[914px] top-[391px] w-[4px] h-[4px] bg-[#111] border border-white box-content" />
        </div>
        <VScroll />
      </div>
      <SheetBar />
      <StatusBar />
      <Taskbar />
    </div>
  );
}
